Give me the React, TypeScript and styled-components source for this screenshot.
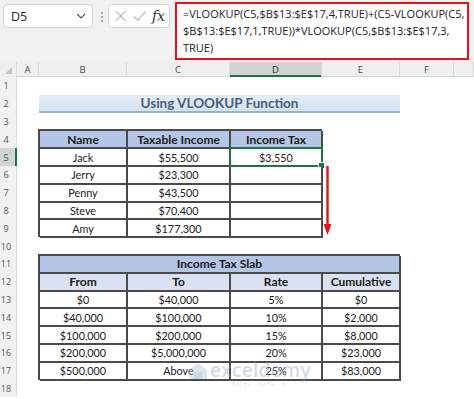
import React from 'react'
import styled, { createGlobalStyle } from 'styled-components'

const GlobalStyle = createGlobalStyle`
  html, body {
    margin: 0;
    padding: 0;
    background: #fff;
  }
  body {
    font-family: Lato, "Liberation Sans", sans-serif;
  }
`

const GREEN = '#217346'
const LINE = '#4a4a4a'

const Page = styled.div`
  position: relative;
  width: 474px;
  height: 399px;
  overflow: hidden;
  background: #fff;
`

/* ---------- formula bar ---------- */

const TopBar = styled.div`
  display: flex;
  align-items: flex-start;
  height: 62px;
  box-sizing: border-box;
  padding: 2px 5px 0 3px;
  background: #f1f1f1;
`

const NameBox = styled.div`
  display: flex;
  align-items: center;
  justify-content: space-between;
  box-sizing: border-box;
  width: 90px;
  height: 24px;
  margin-top: 2px;
  padding: 0 6px 0 7px;
  background: #fff;
  border: 1px solid #d6d6d6;
  border-radius: 4px;
  font-family: "Open Sans", sans-serif;
  font-size: 12.5px;
  color: #262626;
`

const Dots = styled.div`
  display: flex;
  flex-direction: column;
  gap: 2px;
  margin: 10px 0 0 8px;

  span {
    width: 2px;
    height: 2px;
    background: #a8a8a8;
  }
`

const FxBox = styled.div`
  display: flex;
  align-items: center;
  gap: 6px;
  box-sizing: border-box;
  width: 62px;
  height: 24px;
  margin: 2px 0 0 5px;
  padding: 0 4px 0 6px;
  background: #fff;
  border: 1px solid #d6d6d6;
  border-radius: 4px;
`

const Fx = styled.span`
  margin-left: auto;
  font-family: "DejaVu Serif", "Liberation Serif", serif;
  font-style: italic;
  font-size: 14px;
  color: #333;
`

const FormulaBox = styled.div`
  flex: 1;
  box-sizing: border-box;
  height: 58px;
  margin-left: 5px;
  padding: 1px 6px 0;
  background: #fff;
  border: 2px solid #e8101a;
  font-family: "Open Sans", sans-serif;
  font-size: 11px;
  line-height: 17px;
  color: #222;
  white-space: nowrap;
  overflow: hidden;
`

const FormulaLine = styled.div``

/* ---------- sheet grid ---------- */

const Sheet = styled.div`
  display: grid;
  grid-template-columns: 17px 22px 88px 103px 92px 78px 54px 1fr;
  grid-template-rows: 15px repeat(18, 17.8px);
`

const Corner = styled.div`
  display: flex;
  justify-content: flex-end;
  align-items: flex-end;
  padding: 0 4px 3px 0;
  background: #efefef;
  border-right: 1px solid #dcdcdc;

  &::after {
    content: '';
    width: 0;
    height: 0;
    border-left: 7px solid transparent;
    border-bottom: 7px solid #c4c4c4;
  }
`

const ColHead = styled.div<{ $selected?: boolean }>`
  display: flex;
  align-items: center;
  justify-content: center;
  box-sizing: border-box;
  background: ${({ $selected }) => ($selected ? '#d3d3d3' : '#efefef')};
  border-right: 1px solid #d9d9d9;
  box-shadow: ${({ $selected }) => ($selected ? `inset 0 -2px 0 ${GREEN}` : 'inset 0 -1px 0 #d4d4d4')};
  font-family: "Open Sans", sans-serif;
  font-size: 9.5px;
  color: ${({ $selected }) => ($selected ? '#2a2a2a' : '#4a4a4a')};
`

const RowHead = styled.div<{ $selected?: boolean }>`
  display: flex;
  align-items: center;
  justify-content: center;
  box-sizing: border-box;
  padding-right: 5px;
  background: ${({ $selected }) => ($selected ? '#d3d3d3' : '#f1f1f1')};
  box-shadow: ${({ $selected }) => ($selected ? `inset -2px 0 0 ${GREEN}` : 'inset -1px 0 0 #dcdcdc')};
  font-family: "Open Sans", sans-serif;
  font-size: 9px;
  color: ${({ $selected }) => ($selected ? '#1d5e38' : '#555')};
`

const Title = styled.div`
  grid-column: 3 / 7;
  grid-row: 3;
  display: flex;
  align-items: center;
  justify-content: center;
  box-sizing: border-box;
  background: linear-gradient(#e4ecf7, #d6e2f0);
  border-bottom: 2px solid #95b3d7;
  font-weight: 700;
  font-size: 13.5px;
  color: #44607e;
`

const Table = styled.div<{ $col: string; $row: string; $cols: string }>`
  grid-column: ${({ $col }) => $col};
  grid-row: ${({ $row }) => $row};
  display: grid;
  grid-template-columns: ${({ $cols }) => $cols};
  grid-auto-rows: 17.8px;
  margin: -1px 0 0 -1px;
  border-top: 2px solid ${LINE};
  border-left: 2px solid ${LINE};
`

const Cell = styled.div<{ $head?: boolean; $bg?: string; $span?: number }>`
  position: relative;
  display: flex;
  align-items: center;
  justify-content: center;
  box-sizing: border-box;
  grid-column: span ${({ $span = 1 }) => $span};
  background: ${({ $bg = '#fff' }) => $bg};
  border-right: 2px solid ${LINE};
  border-bottom: 2px solid ${LINE};
  font-weight: ${({ $head }) => ($head ? 700 : 400)};
  font-size: ${({ $head }) => ($head ? '12px' : '10.8px')};
  color: #1a1a1a;
`

const Selection = styled.div`
  position: absolute;
  inset: -2px -2px -2px -2px;
  border: 2px solid ${GREEN};
  pointer-events: none;
`

const FillHandle = styled.div`
  position: absolute;
  right: -4px;
  bottom: -4px;
  width: 5px;
  height: 5px;
  background: ${GREEN};
  border: 1px solid #fff;
`

const Arrow = styled.svg`
  grid-column: 6;
  grid-row: 7 / 11;
  margin-left: 1px;
`

const Watermark = styled.div`
  position: absolute;
  left: 188px;
  top: 360px;
  display: flex;
  align-items: flex-start;
  gap: 2px;
  opacity: 0.4;
  pointer-events: none;
`

const MarkText = styled.div`
  display: flex;
  flex-direction: column;
  align-items: center;
  font-family: "Open Sans", sans-serif;
  color: #8fa8c8;

  b {
    font-size: 19px;
    font-weight: 600;
    line-height: 21px;
    letter-spacing: 0.3px;
  }

  small {
    font-size: 5px;
    letter-spacing: 1px;
    color: #9aa8b8;
  }
`

const columns = ['A', 'B', 'C', 'D', 'E', 'F', '']

const people = [
  ['Jack', '$55,500', '$3,550'],
  ['Jerry', '$23,300', ''],
  ['Penny', '$43,500', ''],
  ['Steve', '$70,400', ''],
  ['Amy', '$177,300', ''],
]

const slabs = [
  ['$0', '$40,000', '5%', '$0'],
  ['$40,000', '$100,000', '10%', '$2,000'],
  ['$100,000', '$200,000', '15%', '$8,000'],
  ['$200,000', '$5,000,000', '20%', '$23,000'],
  ['$500,000', 'Above', '25%', '$83,000'],
]

export default function App() {
  return (
    <Page>
      <GlobalStyle />
      <TopBar>
        <NameBox>
          <span>D5</span>
          <svg width="10" height="6" viewBox="0 0 10 6">
            <path d="M1 1 L5 5 L9 1" fill="none" stroke="#555" strokeWidth="1.2" />
          </svg>
        </NameBox>
        <Dots>
          <span />
          <span />
          <span />
        </Dots>
        <FxBox>
          <svg width="12" height="12" viewBox="0 0 12 12">
            <path d="M1 1 L11 11 M11 1 L1 11" stroke="#b5b5b5" strokeWidth="1.2" />
          </svg>
          <svg width="14" height="12" viewBox="0 0 14 12">
            <path d="M1 6.5 L5 10.5 L13 1.5" fill="none" stroke="#b5b5b5" strokeWidth="1.2" />
          </svg>
          <Fx>fx</Fx>
        </FxBox>
        <FormulaBox>
          <FormulaLine>=VLOOKUP(C5,$B$13:$E$17,4,TRUE)+(C5-VLOOKUP(C5,</FormulaLine>
          <FormulaLine>$B$13:$E$17,1,TRUE))*VLOOKUP(C5,$B$13:$E$17,3,</FormulaLine>
          <FormulaLine>TRUE)</FormulaLine>
        </FormulaBox>
      </TopBar>

      <Sheet>
        <Corner />
        {columns.map((c, i) => (
          <ColHead key={i} $selected={c === 'D'}>
            {c}
          </ColHead>
        ))}
        {Array.from({ length: 18 }, (_, i) => (
          <RowHead key={i} style={{ gridRow: i + 2, gridColumn: 1 }} $selected={i + 1 === 5}>
            {i + 1}
          </RowHead>
        ))}

        <Title>Using VLOOKUP Function</Title>

        <Table $col="3 / 6" $row="5 / 11" $cols="88px 103px 92px">
          <Cell $head $bg="#b4c6e7">Name</Cell>
          <Cell $head $bg="#b4c6e7">Taxable Income</Cell>
          <Cell $head $bg="#b4c6e7">Income Tax</Cell>
          {people.map((p, r) =>
            p.map((v, c) => (
              <Cell key={`${r}-${c}`}>
                {v}
                {r === 0 && c === 2 && (
                  <Selection>
                    <FillHandle />
                  </Selection>
                )}
              </Cell>
            ))
          )}
        </Table>

        <Arrow width="9" height="71" viewBox="0 0 9 71">
          <path d="M4.5 0 V60" stroke="#e8101a" strokeWidth="2.4" />
          <path d="M0.5 58 H8.5 L4.5 69 Z" fill="#e8101a" />
        </Arrow>

        <Table $col="3 / 7" $row="12 / 19" $cols="88px 103px 92px 78px">
          <Cell $head $bg="#b4c6e7" $span={4}>Income Tax Slab</Cell>
          <Cell $head $bg="#d9e1f2">From</Cell>
          <Cell $head $bg="#d9e1f2">To</Cell>
          <Cell $head $bg="#d9e1f2">Rate</Cell>
          <Cell $head $bg="#d9e1f2">Cumulative</Cell>
          {slabs.map((s, r) => s.map((v, c) => <Cell key={`${r}-${c}`}>{v}</Cell>))}
        </Table>
      </Sheet>

      <Watermark>
        <svg width="20" height="20" viewBox="0 0 20 20">
          <path d="M1 10 L10 3 L19 10 V19 H1 Z" fill="#a9bdd6" />
          <path d="M6 19 V12 H14 V19" fill="#7f9cc2" />
        </svg>
        <MarkText>
          <b>exceldemy</b>
          <small>EXCEL · DATA · BI</small>
        </MarkText>
      </Watermark>
    </Page>
  )
}
